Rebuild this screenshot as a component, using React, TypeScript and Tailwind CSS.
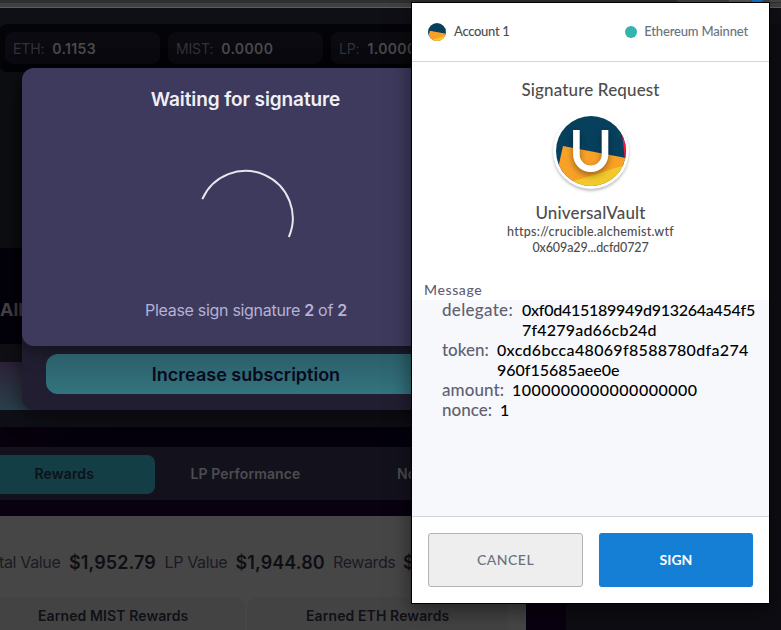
import React from "react";

const popupFont = "font-['Lato','Liberation_Sans',sans-serif]";

function Balance({ label, value }: { label: string; value: string }) {
  return (
    <div className="flex h-8 w-[155px] shrink-0 items-center gap-2 rounded-lg bg-[#0a0a10] pt-px pl-2 text-[14px] text-[#33323c]">
      <span className="tracking-[-0.15px]">{label}</span>
      <span className="font-semibold tracking-[0.35px] text-[#4a4a4c]">{value}</span>
    </div>
  );
}

function Dashboard() {
  return (
    <div className="flex h-[630px] w-[781px] flex-col bg-[#0d0d13]">
      <div className="flex h-[3px] shrink-0 justify-end bg-[#2f2f2f]">
        <div className="h-[2px] w-[52px] bg-[#444444]" />
        <div className="h-[2px] w-[22px] bg-[#5a5a5a]" />
        <div className="h-[2px] w-3 rounded-b-md bg-[#1a78d0]" />
        <div className="h-[2px] w-[18px] bg-[#444444]" />
      </div>
      <div className="flex h-1 shrink-0 bg-[#404040]" />
      <div className="h-px shrink-0 bg-[#5d5d5d]" />
      <div className="h-4 shrink-0 bg-[#0f0f16]" />
      <div className="-ml-[3px] flex h-12 w-[569px] shrink-0 items-center gap-2 rounded-l-xl bg-[#040408] pl-2">
        <Balance label="ETH:" value="0.1153" />
        <Balance label="MIST:" value="0.0000" />
        <Balance label="LP:" value="1.0000" />
      </div>
      <div className="h-[176px] w-[566px] shrink-0 bg-[#0e0f13]" />
      <div className="flex h-24 w-[566px] shrink-0 items-center bg-[#04010b] pt-[26px] text-[18px] font-bold text-[#464548]">
        <span>All</span>
      </div>
      <div className="h-[18px] w-[566px] shrink-0 bg-[#101016]" />
      <div className="h-12 w-[526px] shrink-0 bg-linear-to-t from-[#28424c] to-[#2b2239]" />
      <div className="h-[17px] w-[566px] shrink-0 bg-[#0f0f17]" />
      <div className="h-5 w-[566px] shrink-0 bg-linear-to-r from-[#08010d] to-[#04010c] to-20%" />
      <div className="flex h-[53px] w-[566px] shrink-0 items-start bg-[#13121c] pt-2 text-[14px] font-semibold whitespace-nowrap">
        <div className="flex h-[39px] w-[155px] items-center rounded-r-lg bg-[#143e46] pb-[2px] pl-[34.5px] tracking-[0.15px] text-[#0b1218]">Rewards</div>
        <div className="flex h-[39px] w-[242px] items-center pb-[2px] pl-[35.5px] tracking-[0.1px] text-[#4d4c50]">LP Performance</div>
        <div className="flex h-[39px] items-center pb-[2px] text-[#4d4c50]">Normal</div>
      </div>
      <div className="h-4 w-[566px] shrink-0 bg-[#08010f]" />
      <div className="flex h-[114px] shrink-0 overflow-hidden">
        <div className="flex w-[526px] shrink-0 flex-col bg-[#464646]">
          <div className="flex h-[81px] items-center pt-[11px] whitespace-nowrap text-[#1b1a22]">
            <span className="-ml-px w-[70px] text-[16px] tracking-[-0.35px]">tal Value</span>
            <span className="w-[95.5px] text-[18px] font-semibold tracking-[0.1px] text-[#0f0e15]">$1,952.79</span>
            <span className="w-[71px] text-[16px] tracking-[-0.35px]">LP Value</span>
            <span className="w-[97.5px] text-[18px] font-semibold tracking-[0.1px] text-[#0f0e15]">$1,944.80</span>
            <span className="w-[70px] text-[16px] tracking-[-0.4px]">Rewards</span>
            <span className="text-[18px] font-semibold text-[#0f0e15]">$7.99</span>
          </div>
          <div className="flex h-[33px] gap-[2px] text-[14px] font-semibold tracking-[0.1px] text-[#101017]">
            <div className="w-[245px] rounded-tr-xl bg-[#434343] pt-2 pl-[38px]">Earned MIST Rewards</div>
            <div className="w-[261px] rounded-t-xl bg-[#434343] pt-2 pl-[59px]">Earned ETH Rewards</div>
          </div>
        </div>
        <div className="w-10 bg-[#09010f]" />
      </div>
    </div>
  );
}

function SubscriptionModal() {
  return (
    <div className="absolute top-[68px] left-[22px] h-[342px] w-[448px] rounded-xl bg-[#211e31] shadow-[0_6px_22px_rgba(0,0,0,0.55)]">
      <div className="flex h-[278px] flex-col items-center rounded-xl bg-[#3d3a5d] shadow-[0_4px_20px_rgba(0,0,0,0.5)]">
        <h2 className="mt-[18px] pr-px text-[19px] leading-7 font-semibold tracking-[-0.1px] text-[#f0eff5]">Waiting for signature</h2>
        <svg className="mt-[54px] h-[98px] w-[98px]" viewBox="0 0 98 98" fill="none">
          <path d="M5.3 31.2A47 47 0 0 1 91.8 69" stroke="#e8e7ee" strokeWidth="2" />
        </svg>
        <p className="mt-[30px] text-[16px] leading-7 tracking-[-0.3px] text-[#b6b1d6]">
          Please sign signature <b className="font-semibold">2</b> of <b className="font-semibold">2</b>
        </p>
      </div>
      <div className="mx-6 mt-2 flex h-10 items-center justify-center rounded-xl bg-linear-to-b from-[#2b5f69] to-[#33747f] text-[18px] font-semibold text-[#080a1c]">
        Increase subscription
      </div>
    </div>
  );
}

function Jazzicon({ className }: { className: string }) {
  return (
    <svg className={className} viewBox="0 0 70 70">
      <defs>
        <clipPath id="disc"><circle cx="35" cy="35" r="35" /></clipPath>
      </defs>
      <g clipPath="url(#disc)">
        <rect width="70" height="70" fill="#07405d" />
        <path d="M64 0L69 44H75V0Z" fill="#fb1838" />
        <path d="M7 30L75 43V75H-3Z" fill="#f9a127" />
        <path d="M15 66L72 48V75H15Z" fill="#f2c92c" />
      </g>
    </svg>
  );
}

type Line = { text: string; tracking: string };

function Field({ name, lines, nameClass }: { name: string; lines: Line[]; nameClass: string }) {
  return (
    <div className="flex text-[16px] leading-5">
      <span className={`shrink-0 text-[#5f6073] ${nameClass}`}>{name}</span>
      <div className="flex flex-col text-black">
        {lines.map((line) => (
          <span key={line.text} className={line.tracking}>{line.text}</span>
        ))}
      </div>
    </div>
  );
}

function WalletPopup() {
  return (
    <div className={`absolute top-[2px] left-[411px] z-20 flex h-[602px] w-[359px] flex-col border border-black bg-white font-medium shadow-[0_6px_20px_rgba(0,0,0,0.5)] ${popupFont}`}>
      <header className="flex h-[59px] shrink-0 items-center border-b border-[#d2d5d9] pr-[21px] pl-4 text-[13px]">
        <Jazzicon className="h-[18px] w-[18px]" />
        <span className="ml-2 tracking-[-0.3px] text-[#4d4d4d]">Account 1</span>
        <span className="ml-auto h-3 w-3 rounded-full bg-[#33b5ad]" />
        <span className="ml-[7px] tracking-[-0.17px] text-[#6a737d]">Ethereum Mainnet</span>
      </header>
      <section className="flex h-[238px] shrink-0 flex-col items-center text-[#4d4d4d]">
        <h1 className="mt-4 text-[17px] leading-6 tracking-[0.15px]">Signature Request</h1>
        <div className="relative mt-[11px] flex h-[76px] w-[76px] shrink-0 items-center justify-center rounded-full bg-white shadow-[0_2px_3px_rgba(0,0,0,0.25)]">
          <Jazzicon className="h-[70px] w-[70px]" />
          <svg className="absolute inset-0 h-[76px] w-[76px] drop-shadow-[0_3px_3px_rgba(0,0,0,0.4)]" viewBox="0 0 76 76" fill="none">
            <path d="M23.4 17V41.5A14.3 14.3 0 0 0 52 41.5V17" stroke="white" strokeWidth="6.6" />
          </svg>
        </div>
        <div className="mt-[13px] text-[17px] leading-[22px] tracking-[0.15px]">UniversalVault</div>
        <div className="text-[12.5px] leading-4 tracking-[0.25px]">https://crucible.alchemist.wtf</div>
        <div className="text-[12.5px] leading-4 tracking-[-0.1px]">0x609a29...dcfd0727</div>
        <div className="mt-[24px] self-start pl-3 text-[14px] leading-5 tracking-[0.6px] text-[#5f6073]">Message</div>
      </section>
      <section className="flex flex-1 flex-col bg-[#f7f8fb] pl-[30px]">
        <Field
          name="delegate:"
          lines={[
            { text: "0xf0d415189949d913264a454f5", tracking: "tracking-[-0.27px]" },
            { text: "7f4279ad66cb24d", tracking: "tracking-[0.2px]" },
          ]}
          nameClass="w-[80px] text-[17px] tracking-[0.3px]"
        />
        <Field
          name="token:"
          lines={[
            { text: "0xcd6bcca48069f8588780dfa274", tracking: "tracking-[0.33px]" },
            { text: "960f15685aee0e", tracking: "tracking-normal" },
          ]}
          nameClass="w-[55px] text-[17px]"
        />
        <Field name="amount:" lines={[{ text: "1000000000000000000", tracking: "tracking-[0.48px]" }]} nameClass="w-[70px] text-[17px] tracking-[0.1px]" />
        <Field name="nonce:" lines={[{ text: "1", tracking: "tracking-normal" }]} nameClass="w-[58px] text-[17px]" />
      </section>
      <footer className="flex h-[87px] shrink-0 gap-4 border-t border-[#d2d5de] p-4 text-[14px]">
        <button className="h-[54px] w-[155px] rounded-[3px] border border-[#b3b3b3] bg-[#eeeeee] pb-[2px] tracking-[0.5px] text-[#6a737d]">CANCEL</button>
        <button className="h-[54px] w-[154px] rounded-[3px] bg-[#157fd5] pb-[2px] font-bold text-white">SIGN</button>
      </footer>
    </div>
  );
}

export default function App() {
  return (
    <main className="relative h-[630px] w-[781px] overflow-hidden font-['Inter','Liberation_Sans',sans-serif]">
      <Dashboard />
      <SubscriptionModal />
      <WalletPopup />
    </main>
  );
}
